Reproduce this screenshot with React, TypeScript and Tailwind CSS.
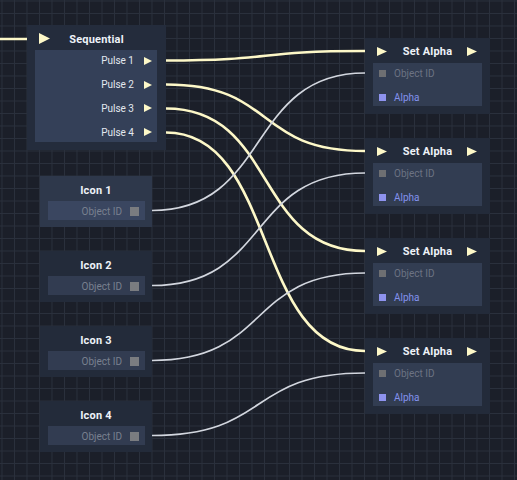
import React from "react";

const CREAM = "#fdf8c8";
const WIRE_GRAY = "#d3d7df";

function Tri({ w = 10, h = 11 }: { w?: number; h?: number }) {
  return (
    <svg width={w} height={h} viewBox={`0 0 ${w} ${h}`} className="block shrink-0">
      <polygon points={`0,0 ${w},${h / 2} 0,${h}`} fill={CREAM} />
    </svg>
  );
}

function wire(x0: number, y0: number, x1: number, y1: number) {
  const d = (x1 - x0) * 0.56;
  return `M ${x0} ${y0} C ${x0 + d} ${y0}, ${x1 - d} ${y1}, ${x1} ${y1}`;
}

function SequentialNode() {
  return (
    <div className="absolute left-[27px] top-[25px] w-[139px] h-[125px] bg-[#242c3c] flex flex-col">
      <div className="relative h-[25px] flex items-center justify-center pt-[5px]">
        <div className="absolute left-[12px] top-[8px]">
          <Tri w={11} h={11} />
        </div>
        <span className="text-[11px] font-bold text-[#eef2f8] tracking-[0.2px]">Sequential</span>
      </div>
      <div className="mx-[8px] w-[122px] h-[92px] bg-[#344058] flex flex-col pt-[1px] gap-[4px]">
        {["Pulse 1", "Pulse 2", "Pulse 3", "Pulse 4"].map((p) => (
          <div key={p} className="h-[20px] flex items-center justify-end pr-[5px] gap-[10px]">
            <span className="text-[10px] text-[#e3e8ef]">{p}</span>
            <Tri w={8} h={8} />
          </div>
        ))}
      </div>
    </div>
  );
}

function IconNode({ top, title, active }: { top: number; title: string; active?: boolean }) {
  return (
    <div
      className={`absolute left-[40px] w-[112px] h-[51px] flex flex-col ${active ? "bg-[#2e384b]" : "bg-[#232b3a]"}`}
      style={{ top }}
    >
      <div className="h-[25px] flex items-center justify-center pt-[5px]">
        <span className="text-[11px] font-bold text-[#eef2f8] tracking-[0.2px]">{title}</span>
      </div>
      <div
        className={`ml-[8px] w-[97px] h-[19px] flex items-center justify-end pr-[6px] gap-[8px] pt-[1px] ${active ? "bg-[#3a4660]" : "bg-[#323c51]"}`}
      >
        <span className="text-[10px] text-[#79808f]">Object ID</span>
        <div className="w-[9px] h-[9px] bg-[#7a7c80]" />
      </div>
    </div>
  );
}

function SetAlphaNode({ top }: { top: number }) {
  return (
    <div className="absolute left-[365px] w-[125px] h-[76px] bg-[#232b3a] flex flex-col" style={{ top }}>
      <div className="relative h-[25px] flex items-center justify-center pt-[3px]">
        <div className="absolute left-[12px] top-[9px]">
          <Tri w={10} h={9} />
        </div>
        <span className="text-[11px] font-bold text-[#eef2f8] tracking-[0.2px]">Set Alpha</span>
        <div className="absolute right-[13px] top-[9px]">
          <Tri w={10} h={9} />
        </div>
      </div>
      <div className="mx-[8px] h-[43px] bg-[#323d52] flex flex-col gap-[6px] pt-[1px]">
        <div className="h-[19px] flex items-center pl-[6px] gap-[8px]">
          <div className="w-[7px] h-[7px] bg-[#6e6f72]" />
          <span className="text-[10px] text-[#6c7383]">Object ID</span>
        </div>
        <div className="h-[19px] flex items-center pl-[6px] gap-[8px]">
          <div className="w-[7px] h-[7px] bg-[#8e93ef]" />
          <span className="text-[10px] text-[#8392ee]">Alpha</span>
        </div>
      </div>
    </div>
  );
}

export default function App() {
  const pulseYs = [60.5, 84.5, 108.5, 132.5];
  const alphaTops = [38, 138, 238, 338];
  const iconTops = [176, 251, 326, 401];
  return (
    <div
      className="relative w-[517px] h-[480px] overflow-hidden bg-[#1b1f29] bg-[linear-gradient(to_right,#2a303c_1px,transparent_1px),linear-gradient(to_bottom,#2a303c_1px,transparent_1px)] bg-[size:12.5px_12.5px] bg-[position:1.5px_0.5px]"
      style={{ fontFamily: "Roboto, 'Noto Sans', sans-serif" }}
    >
      <svg className="absolute inset-0" width={517} height={480}>
        <path d="M 0 39 L 28 39" stroke={CREAM} strokeWidth={2.5} fill="none" />
        {pulseYs.map((y, i) => (
          <path key={`p${i}`} d={wire(166, y, 365, alphaTops[i] + 13)} stroke={CREAM} strokeWidth={2.6} fill="none" />
        ))}
        {iconTops.map((t, i) => (
          <path key={`i${i}`} d={wire(152, t + 34.5, 365, alphaTops[i] + 35)} stroke={WIRE_GRAY} strokeWidth={1.7} fill="none" />
        ))}
      </svg>
      <SequentialNode />
      {iconTops.map((t, i) => (
        <IconNode key={t} top={t} title={`Icon ${i + 1}`} active={i === 0} />
      ))}
      {alphaTops.map((t) => (
        <SetAlphaNode key={t} top={t} />
      ))}
    </div>
  );
}
